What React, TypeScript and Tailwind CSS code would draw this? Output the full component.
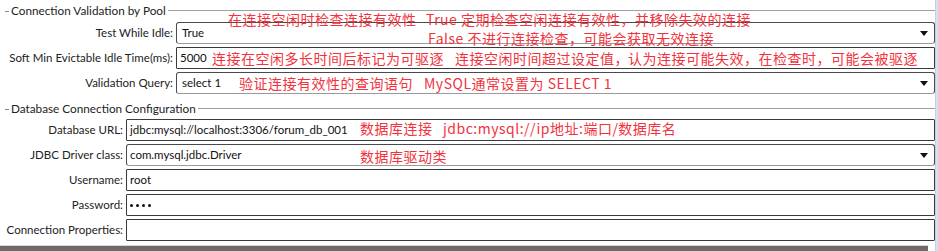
import React from 'react';

const labelFont = { fontFamily: 'Lato, "Liberation Sans", sans-serif' };

const Arrow = () => (
  <svg width="8" height="5" viewBox="0 0 8 5" className="mr-[6px] shrink-0">
    <path d="M0 0 H8 L4 5 Z" fill="#111" />
  </svg>
);

interface FieldProps {
  label: string;
  value?: React.ReactNode;
  combo?: boolean;
  labelWidth: number;
  pad?: string;
}

const Field: React.FC<FieldProps> = ({ label, value, combo, labelWidth, pad = 'pl-[3px]' }) => (
  <div className="flex items-center h-[22px]">
    <div
      className="text-[11.5px] text-[#222] text-right pr-[3px] shrink-0 leading-none whitespace-nowrap"
      style={{ width: labelWidth }}
    >
      {label}
    </div>
    <div
      className={`flex-1 h-full flex items-center justify-between bg-white border ${
        combo ? 'border-[#4a4a4a] border-b-[#9a9a9a] rounded-[3px]' : 'border-[#3a3a3a] rounded-[1px]'
      } ${pad}`}
    >
      <span className="text-[11.5px] text-[#111] leading-none whitespace-nowrap">{value}</span>
      {combo && <Arrow />}
    </div>
  </div>
);

const Legend = ({ title }: { title: string }) => (
  <div className="flex items-center h-[22px]">
    <div className="w-[4px] h-[1px] bg-[#888] ml-[5px] mr-[2px]" />
    <span className="text-[11.75px] text-[#222] leading-none pr-[2px] whitespace-nowrap">{title}</span>
    <div className="flex-1 flex flex-col">
      <div className="h-[1px] bg-[#a0a0a0]" />
      <div className="h-[1px] bg-white" />
    </div>
  </div>
);

const Note = ({ text, x, y }: { text: string; x: number; y: number }) => (
  <div
    className="absolute text-[14px] tracking-[0.5px] leading-none text-[#f2323c] whitespace-pre"
    style={{ left: x, top: y, fontFamily: '"Noto Sans CJK SC", sans-serif' }}
  >
    {text}
  </div>
);

const Dots = () => (
  <span className="flex gap-[3px] items-center">
    {[0, 1, 2, 3].map((i) => (
      <span key={i} className="w-[3px] h-[3px] rounded-full bg-[#111]" />
    ))}
  </span>
);

export default function App() {
  return (
    <div className="relative w-[938px] h-[251px] bg-white overflow-hidden flex" style={labelFont}>
      <div className="w-[935px] flex flex-col">
        <Legend title="Connection Validation by Pool" />
        <div className="flex flex-col gap-[3px]">
          <Field label="Test While Idle:" value="True" combo labelWidth={176} pad="pl-[5px]" />
          <Field label="Soft Min Evictable Idle Time(ms):" value="5000" labelWidth={176} />
          <Field label="Validation Query:" value="select 1" combo labelWidth={176} pad="pl-[5px]" />
        </div>
        <div className="mt-[4px]">
          <Legend title="Database Connection Configuration" />
        </div>
        <div className="flex flex-col gap-[3px] mt-[-1px]">
          <Field label="Database URL:" value="jdbc:mysql://localhost:3306/forum_db_001" labelWidth={126} />
          <Field label="JDBC Driver class:" value="com.mysql.jdbc.Driver" combo labelWidth={126} />
          <Field label="Username:" value="root" labelWidth={126} />
          <Field label="Password:" value={<Dots />} labelWidth={126} />
          <Field label="Connection Properties:" labelWidth={126} />
        </div>
        <div className="mt-auto">
          <div className="h-[1px] w-[928px] bg-[#d8d8d8]" />
          <div className="h-[5px] w-[928px] bg-[#6b6b6b]" />
        </div>
      </div>
      <div className="w-[3px] bg-[#d6e2f1] border-l border-[#c0d0e6]" />

      <Note x={228} y={12} text="在连接空闲时检查连接有效性" />
      <Note x={426} y={12} text="True 定期检查空闲连接有效性，并移除失效的连接" />
      <Note x={428} y={31} text="False 不进行连接检查，可能会获取无效连接" />
      <Note x={212} y={51} text="连接在空闲多长时间后标记为可驱逐" />
      <Note x={455} y={51} text="连接空闲时间超过设定值，" />
      <Note x={628} y={51} text="认为连接可能失效，在检查时，可能会被驱逐" />
      <Note x={239} y={76} text="验证连接有效性的查询语句" />
      <Note x={424} y={76} text="MySQL通常设置为 SELECT 1" />
      <Note x={360} y={121} text="数据库连接" />
      <Note x={443} y={121} text="jdbc:mysql://ip地址:端口/数据库名" />
      <Note x={360} y={149} text="数据库驱动类" />
    </div>
  );
}
